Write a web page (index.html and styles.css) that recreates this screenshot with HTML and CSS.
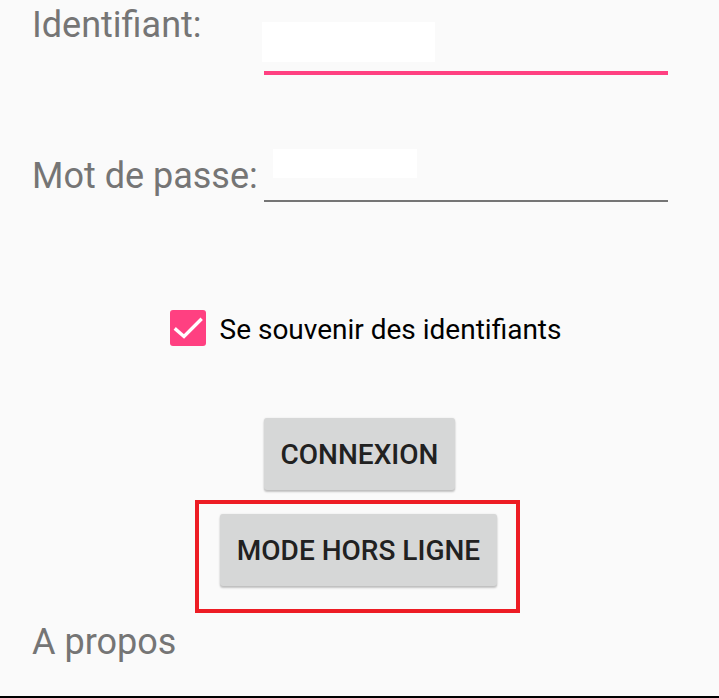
FILE: index.html
```html
<!DOCTYPE html>
<html lang="fr">
<head>
<meta charset="utf-8">
<title>Connexion</title>
<link rel="stylesheet" href="styles.css">
</head>
<body>
<div class="screen">
  <div class="row row-login">
    <label class="label label-login">Identifiant:</label>
    <div class="field">
      <div class="input-box box-login"></div>
      <div class="underline underline-focus"></div>
    </div>
  </div>
  <div class="row row-pass">
    <label class="label label-pass">Mot de passe:</label>
    <div class="field">
      <div class="input-box box-pass"></div>
      <div class="underline underline-idle"></div>
    </div>
  </div>
  <div class="check-row">
    <span class="checkbox">
      <svg width="36" height="36" viewBox="0 0 36 36"><path d="M6 19.5 L14 26.5 L30.5 10" fill="none" stroke="#fff" stroke-width="3.4" stroke-linecap="square"/></svg>
    </span>
    <span class="check-text">Se souvenir des identifiants</span>
  </div>
  <div class="buttons">
    <button class="btn btn-connect">CONNEXION</button>
    <div class="highlight">
      <button class="btn">MODE HORS LIGNE</button>
    </div>
  </div>
  <div class="about">A propos</div>
</div>
</body>
</html>
```
FILE: styles.css
```css
html, body {
  margin: 0;
  padding: 0;
  background: #fafafa;
}
body {
  font-family: Roboto, "Noto Sans", sans-serif;
  height: 698px;
  overflow: hidden;
}
.screen {
  height: 696px;
  border-bottom: 2px solid #000;
  display: flex;
  flex-direction: column;
}
.row {
  display: flex;
  align-items: flex-start;
  padding-left: 32px;
}
.label {
  width: 232px;
  font-size: 36px;
  line-height: 42px;
  color: #757575;
  white-space: nowrap;
}
.label-login { margin-top: 4px; }
.label-pass { margin-top: 80px; }
.field {
  width: 404px;
  display: flex;
  flex-direction: column;
}
.input-box { background: #fff; }
.box-login {
  margin-top: 22px;
  margin-left: -2px;
  width: 173px;
  height: 40px;
}
.box-pass {
  margin-top: 74px;
  margin-left: 9px;
  width: 144px;
  height: 29px;
}
.underline-focus {
  margin-top: 9px;
  height: 4px;
  background: #ff4081;
}
.underline-idle {
  margin-top: 22px;
  height: 2px;
  background: #757575;
}
.check-row {
  margin-top: 108px;
  align-self: center;
  display: flex;
  align-items: flex-start;
  padding-left: 12px;
}
.checkbox {
  width: 36px;
  height: 36px;
  border-radius: 3px;
  background: #ff4081;
  display: block;
}
.checkbox svg { display: block; }
.check-text {
  margin-left: 14px;
  margin-top: 2px;
  font-size: 28px;
  line-height: 36px;
  color: #000;
}
.buttons {
  margin-top: 70px;
  display: flex;
  flex-direction: column;
  align-items: center;
}
.btn {
  height: 72px;
  padding: 0 17px;
  border: none;
  border-radius: 3px;
  background: #d6d7d7;
  font-family: Roboto, "Noto Sans", sans-serif;
  font-weight: 500;
  font-size: 28px;
  color: #212121;
  box-shadow: 0 2px 2px rgba(0,0,0,0.22), 0 0 2px rgba(0,0,0,0.1);
}
.highlight {
  margin-top: 10px;
  margin-right: 4px;
  border: 4px solid #ed1c24;
  padding: 10px 19px 23px 21px;
  display: flex;
}
.about {
  margin-top: 8px;
  padding-left: 32px;
  font-size: 36px;
  line-height: 42px;
  color: #757575;
}
```
